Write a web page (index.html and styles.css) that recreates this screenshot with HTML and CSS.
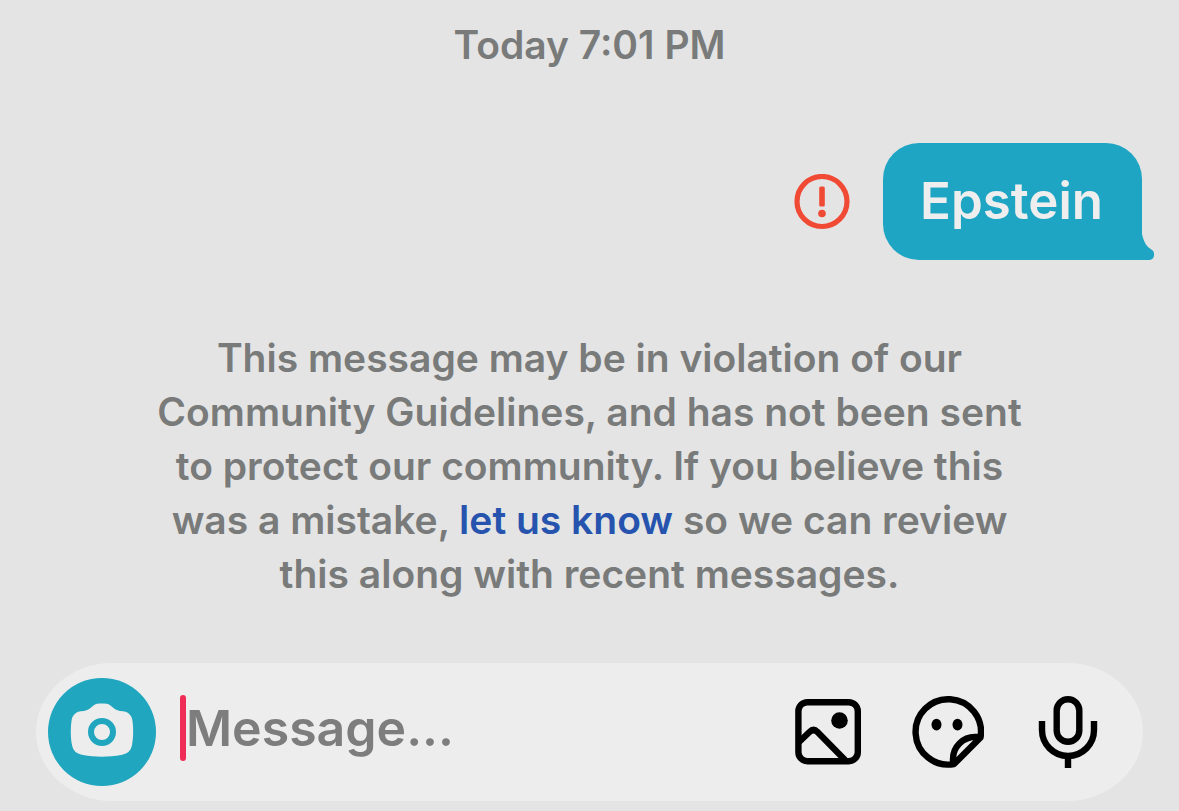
FILE: index.html
```html
<!DOCTYPE html>
<html lang="en">
<head>
  <meta charset="UTF-8">
  <meta name="viewport" content="width=device-width, initial-scale=1.0">
  <title>Messages</title>
  <link rel="stylesheet" href="styles.css">
</head>
<body>
  <main class="chat">
    <time class="timestamp">Today 7:01 PM</time>

    <div class="message-row">
      <svg class="alert-icon" viewBox="0 0 56 56" role="img" aria-label="Not sent">
        <circle cx="28" cy="27.500" r="25" fill="none" stroke="#f04a35" stroke-width="5.2"/>
        <rect x="25.2" y="12.500" width="5.6" height="20" rx="1.5" fill="#f04a35"/>
        <circle cx="28" cy="39.500" r="3.8" fill="#f04a35"/>
      </svg>
      <div class="bubble">
        Epstein
        <svg class="bubble-tail" viewBox="0 0 14 32" aria-hidden="true">
          <path d="M0 0H2V6C3 11 5 16 8 19L12 22C14 23 14 25 14 27C14 30 12 32 8 32H0Z" fill="#1fa5c4"/>
        </svg>
      </div>
    </div>

    <p class="notice">This message may be in violation of our Community Guidelines, and has not been sent to protect our community. If you believe this was a mistake, <a href="#">let us know</a> so we can review this along with recent messages.</p>
  </main>

  <form class="composer">
    <button type="button" class="camera-button" aria-label="Camera">
      <svg viewBox="0 0 108 108">
        <path d="M36 33C41 32 42 30 45 28C48 25.600 50 25.600 54 25.600C58 25.600 60 25.600 63 28C66 30 67 32 72 33C81 33 84 38 84.500 43C85.500 50 85.500 60 84 67C83 73 79 76 73 77C61 79.200 47 79.200 35 77C29 76 25 73 24 67C22.500 60 22.500 50 23.500 43C24 38 27 33 36 33Z" fill="#ededed"/>
        <circle cx="54" cy="54" r="11" fill="none" stroke="#20a6be" stroke-width="6"/>
      </svg>
    </button>

    <span class="caret"></span>
    <input type="text" class="message-input" placeholder="Message..." aria-label="Message">

    <div class="actions">
      <button type="button" class="icon-button" aria-label="Photo">
        <svg viewBox="0 0 72 72">
          <rect x="6.400" y="6.200" width="59.400" height="59" rx="9"/>
          <path d="M7 46L17.500 36Q21.500 32 25.500 36L53 64"/>
          <circle class="solid" cx="47.500" cy="24.500" r="8.300"/>
        </svg>
      </button>
      <button type="button" class="icon-button" aria-label="Sticker">
        <svg viewBox="0 0 72 72">
          <path d="M68.500 41.500A32.700 32.700 0 1 0 42 68.100Z"/>
          <path d="M68 41H63A22 22 0 0 0 41 63V68"/>
          <ellipse class="solid" cx="24.500" cy="28.600" rx="5" ry="5.800"/>
          <ellipse class="solid" cx="45.500" cy="28.600" rx="5" ry="5.800"/>
        </svg>
      </button>
      <button type="button" class="icon-button" aria-label="Voice message">
        <svg viewBox="0 0 72 72">
          <rect x="24.700" y="3.300" width="22.600" height="42.400" rx="11.300"/>
          <path d="M10 25V34A26 26 0 0 0 62 34V25M36 60V72"/>
        </svg>
      </button>
    </div>
  </form>
</body>
</html>
```

FILE: styles.css
```css
* {
  box-sizing: border-box;
}

body {
  margin: 0;
  min-height: 100vh;
  display: flex;
  flex-direction: column;
  background-color: #e4e4e4;
  color: #797a7a;
  font-family: Inter, "Liberation Sans", sans-serif;
  font-weight: 600;
}

/* conversation */
.chat {
  flex: 1;
  display: flex;
  flex-direction: column;
  padding: 18px 37px 0;
}

.timestamp {
  text-align: center;
  font-size: 39px;
  line-height: 54px;
}

.message-row {
  display: flex;
  justify-content: flex-end;
  align-items: center;
  gap: 33px;
  margin-top: 71px;
}

.alert-icon {
  width: 56px;
  height: 56px;
}

.bubble {
  position: relative;
  padding: 26px 39px 27px 37px;
  border-radius: 36px 36px 0 36px;
  background-color: #1fa5c4;
  color: #eeeeee;
  font-size: 51px;
  line-height: 64px;
}

.bubble-tail {
  position: absolute;
  right: -12px;
  bottom: 0;
  width: 14px;
  height: 32px;
}

.notice {
  margin: 71px auto 0;
  max-width: 900px;
  text-align: center;
  font-size: 39px;
  line-height: 54px;
}

.notice a {
  color: #2653ad;
  text-decoration: none;
}

/* message bar */
.composer {
  display: flex;
  align-items: center;
  height: 138px;
  margin: 0 36px 10px;
  padding: 0 39px 0 12px;
  border-radius: 76px / 69px;
  background-color: #ededed;
}

button {
  flex-shrink: 0;
  padding: 0;
  border: none;
  background: none;
  cursor: pointer;
}

button svg {
  display: block;
  width: 100%;
  height: 100%;
}

.camera-button {
  width: 108px;
  height: 108px;
  border-radius: 50%;
  background-color: #20a6be;
}

.caret {
  flex-shrink: 0;
  width: 6px;
  height: 66px;
  margin: 0 0 8px 24px;
  border-radius: 3px;
  background-color: #ee2c55;
}

.message-input {
  flex: 1;
  min-width: 0;
  height: 72px;
  margin-bottom: 8px;
  padding: 0;
  border: none;
  outline: none;
  background: none;
  color: #222222;
  font: inherit;
  font-size: 50px;
}

.message-input::placeholder {
  color: #7d7d7d;
  opacity: 1;
}

.actions {
  display: flex;
  gap: 48px;
}

.icon-button {
  width: 72px;
  height: 72px;
}

.icon-button svg {
  fill: none;
  stroke: #000000;
  stroke-width: 6.4;
  stroke-linejoin: round;
}

.icon-button .solid {
  fill: #000000;
  stroke: none;
}
```
